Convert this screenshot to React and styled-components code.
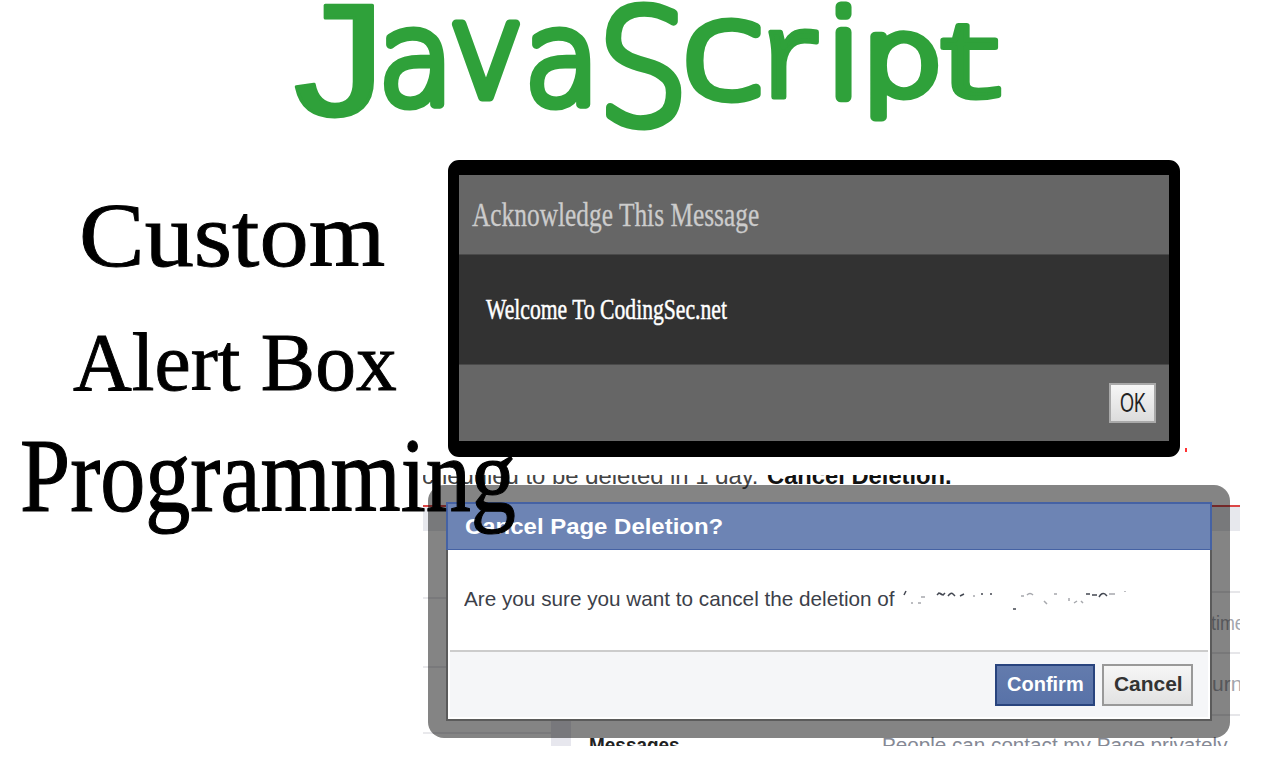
import React, { useLayoutEffect, useRef, useState } from "react";
import styled, { createGlobalStyle } from "styled-components";

const Global = createGlobalStyle`
  * { box-sizing: border-box; }
  body { margin: 0; background: #fff; overflow: hidden; }
`;

const serif = `"Liberation Serif", "Times New Roman", serif`;
const sans = `"Liberation Sans", Arial, sans-serif`;

/* Single line of text stretched or squeezed to an exact width. */
const FitBox = styled.span`
  display: block;
  flex: none;
  height: ${(p) => p.$h}px;
  line-height: ${(p) => p.$h}px;
  white-space: pre;
`;
const FitInk = styled.span`
  display: inline-block;
  transform-origin: 0 50%;
`;
function Fit({ width, h, className, children }) {
  const ref = useRef(null);
  const [scale, setScale] = useState(1);
  useLayoutEffect(() => {
    setScale(width / ref.current.offsetWidth);
  }, [width]);
  return (
    <FitBox $h={h} className={className} style={{ width }}>
      <FitInk ref={ref} style={{ transform: `scaleX(${scale})` }}>{children}</FitInk>
    </FitBox>
  );
}

const Page = styled.main`
  width: 1280px;
  height: 768px;
  background: #fff;
  overflow: hidden;
  display: flex;
  flex-direction: column;
`;
const Banner = styled.header`
  height: 140px;
  flex: none;
`;
const Logo = styled.svg`
  display: block;
  overflow: visible;
`;
const Columns = styled.div`
  display: flex;
  flex: 1;
`;
const Headline = styled.section`
  width: 423px;
  flex: none;
  position: relative;
  z-index: 2;
  font-family: ${serif};
  color: #000;
`;
const Word = styled(Fit)`
  font-size: ${(p) => p.$size}px;
  margin-left: ${(p) => p.$left}px;
  margin-top: ${(p) => p.$top}px;
  -webkit-text-stroke: ${(p) => p.$stroke || 0.9}px #000;
`;
const Examples = styled.section`
  width: 857px;
  display: flex;
  flex-direction: column;
`;
const AlertRow = styled.div`
  display: flex;
  align-items: flex-end;
  margin: 20px 0 0 25px;
`;
const AlertBox = styled.div`
  width: 732px;
  height: 297px;
  border: solid #000;
  border-width: 15px 11px 16px;
  border-radius: 11px;
  background: #000;
  display: flex;
  flex-direction: column;
`;
const AlertHead = styled.div`
  height: 79px;
  background: #666;
  padding: 20px 13px;
  color: #ccc;
  font: 33px ${serif};
  -webkit-text-stroke: 0.3px #ccc;
`;
const AlertBody = styled.div`
  height: 110px;
  background: #323232;
  border-top: 1px solid #4a4a4a;
  padding: 34px 27px;
  color: #fff;
  font: 29px ${serif};
  -webkit-text-stroke: 0.5px #fff;
`;
const AlertFoot = styled.div`
  flex: 1;
  background: #666;
  border-top: 1px solid #4a4a4a;
  padding: 18px 13px;
  display: flex;
  justify-content: flex-end;
`;
const OkButton = styled.button`
  width: 47px;
  height: 40px;
  border: 2px solid #a9a9a9;
  background: linear-gradient(#f6f6f6, #dcdcdc);
  padding: 0 0 0 9px;
  font: 27px ${sans};
  color: #222;
  text-align: left;
`;
const RedMark = styled.i`
  width: 2px;
  height: 4px;
  background: #f33;
  margin: 0 0 5px 5px;
`;

const Shot = styled.div`
  width: 817px;
  height: 271px;
  margin-top: 18px;
  overflow: hidden;
  display: grid;
  grid-template: 271px / 817px;
  font-family: ${sans};
`;
const Backdrop = styled.div`
  grid-area: 1 / 1;
  display: flex;
  flex-direction: column;
  overflow: hidden;
`;
const Notice = styled.div`
  height: 30px;
  display: flex;
  gap: 10px;
  font-size: 24px;
  overflow: hidden;
`;
const NoticeText = styled(Fit)`
  margin: -14px 0 0 -1px;
  font-weight: ${(p) => (p.$bold ? 700 : 400)};
  color: ${(p) => (p.$bold ? "#111" : "#444")};
`;
const Band = styled.div`
  height: 26px;
  flex: none;
  border-top: 2px solid #dc4646;
  background: #e7e8ed;
`;
const Settings = styled.div`
  display: flex;
  height: 215px;
  flex: none;
`;
const Side = styled.div`
  width: 128px;
`;
const Line = styled.div`
  height: ${(p) => p.$h}px;
  border-bottom: 2px solid #e9e9ec;
`;
const Divider = styled.div`
  width: 20px;
  background: #e7e7ee;
`;
const Rows = styled.div`
  flex: 1;
  overflow: hidden;
`;
const Row = styled.div`
  height: ${(p) => p.$h}px;
  border-bottom: 2px solid #e6e6e9;
  padding: ${(p) => p.$pad || "0"};
  overflow: hidden;
  font-size: 21px;
  color: #a3a5ac;
`;
const LastRow = styled.div`
  display: flex;
  padding: 16px 0 0 18px;
  font-size: 20px;
`;
const RowName = styled(Fit)`
  color: #222;
  font-weight: 700;
`;
const RowText = styled(Fit)`
  margin-left: 202px;
  color: #858995;
`;

const Frame = styled.div`
  grid-area: 1 / 1;
  position: relative;
  width: 802px;
  height: 253px;
  margin: 10px 0 0 5px;
  padding: 17px 18px;
  border-radius: 16px;
  background: rgba(10, 10, 10, 0.5);
`;
const Dialog = styled.div`
  height: 219px;
  background: #fff;
  border: 2px solid #5b5b5b;
  border-top: 0;
  display: flex;
  flex-direction: column;
`;
const DialogHead = styled.div`
  height: 48px;
  margin: 0 -2px;
  border: solid #4562a4;
  border-width: 2px 2px 1px;
  background: #6d84b4;
  padding: 8px 17px;
  color: #fff;
  font-size: 22px;
  font-weight: 700;
`;
const DialogBody = styled.div`
  height: 100px;
  flex: none;
  padding: 36px 16px 0;
  display: flex;
  align-items: flex-start;
  color: #3c3f49;
  font-size: 21px;
`;
const Erased = styled.svg`
  flex: none;
  margin-left: 8px;
`;
const DialogFoot = styled.div`
  flex: 1;
  margin: 0 2px 2px;
  border-top: 2px solid #ccc;
  background: #f5f6f8;
  display: flex;
  justify-content: flex-end;
  gap: 7px;
  padding: 12px 15px 8px;
`;
const Button = styled.button`
  width: ${(p) => (p.$primary ? 100 : 91)}px;
  height: 42px;
  border: 2px solid ${(p) => (p.$primary ? "#29447e" : "#999")};
  background: ${(p) => (p.$primary ? "linear-gradient(#637bad, #5872a8)" : "linear-gradient(#f6f6f6, #e2e2e2)")};
  color: ${(p) => (p.$primary ? "#fff" : "#333")};
  padding: 0 0 2px 10px;
  text-align: left;
  font: 700 20px ${sans};
`;

const letters = [
  { c: "J", x: 280, y: 115, w: 115, s: 167, f: "Liberation Mono", k: 3 },
  { c: "a", x: 378, y: 104, w: 76, s: 130, k: 9 },
  { c: "v", x: 448, y: 97, w: 76, s: 134 },
  { c: "a", x: 524, y: 104, w: 76, s: 130, k: 9 },
  { c: "S", x: 597, y: 124, w: 92, s: 158 },
  { c: "c", x: 681, y: 97, w: 84, s: 133 },
  { c: "r", x: 757, y: 97, w: 70, s: 122, f: "Liberation Mono", k: 5 },
  { c: "i", x: 828, y: 97, w: 32, s: 117, k: 11 },
  { c: "p", x: 861, y: 94, w: 82, s: 107 },
  { c: "t", x: 931, y: 97, w: 81, s: 107, f: "Liberation Mono", k: 5 },
];

export default function App() {
  return (
    <>
      <Global />
      <Page>
        <Banner>
          <Logo width="1280" height="140" role="img" aria-label="JavaScript">
            <text fill="#2fa13a" stroke="#2fa13a" strokeLinejoin="round" strokeLinecap="round" fontWeight="200">
              {letters.map((l, i) => (
                <tspan
                  key={i}
                  x={l.x}
                  y={l.y}
                  fontSize={l.s}
                  strokeWidth={l.k || 9}
                  fontFamily={`"${l.f || "DejaVu Sans"}", "DejaVu Sans", sans-serif`}
                  textLength={l.w}
                  lengthAdjust="spacingAndGlyphs"
                >
                  {l.c}
                </tspan>
              ))}
            </text>
          </Logo>
        </Banner>
        <Columns>
          <Headline>
            <Word width={306} h={100} $size={91} $left={79} $top={46}>Custom</Word>
            <Word width={324} h={100} $size={83} $left={73} $top={26}>Alert Box</Word>
            <Word width={496} h={120} $size={106} $left={20} $top={4} $stroke={1.2}>Programming</Word>
          </Headline>
          <Examples>
            <AlertRow>
              <AlertBox>
                <AlertHead><Fit width={287} h={40}>Acknowledge This Message</Fit></AlertHead>
                <AlertBody><Fit width={241} h={40}>Welcome To CodingSec.net</Fit></AlertBody>
                <AlertFoot><OkButton><Fit width={26} h={36}>OK</Fit></OkButton></AlertFoot>
              </AlertBox>
              <RedMark />
            </AlertRow>
            <Shot>
              <Backdrop>
                <Notice>
                  <NoticeText width={336} h={30}>cheduled to be deleted in 1 day.</NoticeText>
                  <NoticeText width={185} h={30} $bold>Cancel Deletion.</NoticeText>
                </Notice>
                <Band />
                <Settings>
                  <Side><Line $h={68} /><Line $h={69} /><Line $h={66} /></Side>
                  <Divider />
                  <Rows>
                    <Row $h={62} />
                    <Row $h={61} $pad="17px 0 0 640px"><Fit width={34} h={26}>time</Fit></Row>
                    <Row $h={62} $pad="17px 0 0 641px"><Fit width={30} h={26}>urn</Fit></Row>
                    <LastRow>
                      <RowName width={91} h={26}>Messages</RowName>
                      <RowText width={350} h={26}>People can contact my Page privately.</RowText>
                    </LastRow>
                  </Rows>
                </Settings>
              </Backdrop>
              <Frame>
                <Dialog>
                  <DialogHead><Fit width={258} h={30}>Cancel Page Deletion?</Fit></DialogHead>
                  <DialogBody>
                    <Fit width={431} h={26}>Are you sure you want to cancel the deletion of</Fit>
                    <Erased width="235" height="28" fill="none" stroke="#6b6e76" strokeWidth="1.5">
                      <path stroke="#444852" d="M1 9l2-4M34 9l2-2 3 2M37 7l3 2 2-2M45 10q3-4 5-2l2 2M57 10l4-2M78 8h2M87 8h2M183 8h4M189 9h5M196 11q3-5 6-3l2 2M110 23h3" />
                      <path d="M8 17h2M15 17h3M18 11h4M70 10h2M118 10h3M124 9q3-3 6 0M141 15l3 3M151 8h3M166 12v3M171 17l3-2M178 15l2 2M206 8h6M222 5v1" opacity="0.6" />
                    </Erased>
                  </DialogBody>
                  <DialogFoot>
                    <Button $primary><Fit width={77} h={36}>Confirm</Fit></Button>
                    <Button><Fit width={69} h={36}>Cancel</Fit></Button>
                  </DialogFoot>
                </Dialog>
              </Frame>
            </Shot>
          </Examples>
        </Columns>
      </Page>
    </>
  );
}
